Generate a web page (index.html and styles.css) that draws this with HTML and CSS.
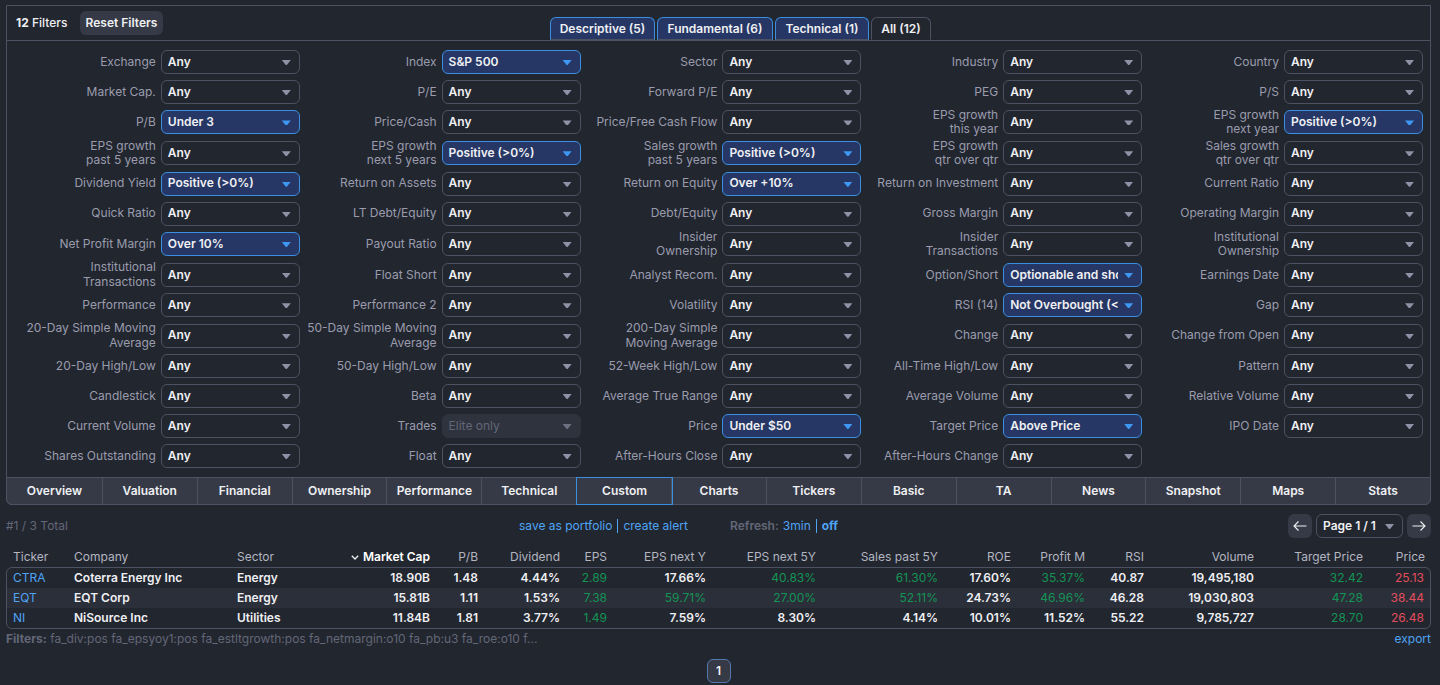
FILE: index.html
```html
<!DOCTYPE html>
<html lang="en">
<head>
<meta charset="utf-8">
<title>Stock Screener</title>
<link rel="stylesheet" href="styles.css">
</head>
<body>
<main class="screener">
<section class="panel">
<header class="panel-head">
<div class="count"><b>12</b> Filters</div>
<button class="reset">Reset Filters</button>
<nav class="tabs"><a class="tab t1">Descriptive (5)</a><a class="tab t2">Fundamental (6)</a><a class="tab t3">Technical (1)</a><a class="tab current">All (12)</a></nav>
</header>
<div class="filters">
<label>Exchange</label><div class="sel">Any</div>
<label>Index</label><div class="sel on">S&amp;P 500</div>
<label>Sector</label><div class="sel">Any</div>
<label>Industry</label><div class="sel">Any</div>
<label>Country</label><div class="sel">Any</div>

<label>Market Cap.</label><div class="sel">Any</div>
<label>P/E</label><div class="sel">Any</div>
<label>Forward P/E</label><div class="sel">Any</div>
<label>PEG</label><div class="sel">Any</div>
<label>P/S</label><div class="sel">Any</div>

<label>P/B</label><div class="sel on">Under 3</div>
<label>Price/Cash</label><div class="sel">Any</div>
<label>Price/Free Cash Flow</label><div class="sel">Any</div>
<label>EPS growth<br>this year</label><div class="sel">Any</div>
<label>EPS growth<br>next year</label><div class="sel on">Positive (&gt;0%)</div>

<label>EPS growth<br>past 5 years</label><div class="sel">Any</div>
<label>EPS growth<br>next 5 years</label><div class="sel on">Positive (&gt;0%)</div>
<label>Sales growth<br>past 5 years</label><div class="sel on">Positive (&gt;0%)</div>
<label>EPS growth<br>qtr over qtr</label><div class="sel">Any</div>
<label>Sales growth<br>qtr over qtr</label><div class="sel">Any</div>

<label>Dividend Yield</label><div class="sel on">Positive (&gt;0%)</div>
<label>Return on Assets</label><div class="sel">Any</div>
<label>Return on Equity</label><div class="sel on">Over +10%</div>
<label>Return on Investment</label><div class="sel">Any</div>
<label>Current Ratio</label><div class="sel">Any</div>

<label>Quick Ratio</label><div class="sel">Any</div>
<label>LT Debt/Equity</label><div class="sel">Any</div>
<label>Debt/Equity</label><div class="sel">Any</div>
<label>Gross Margin</label><div class="sel">Any</div>
<label>Operating Margin</label><div class="sel">Any</div>

<label>Net Profit Margin</label><div class="sel on">Over 10%</div>
<label>Payout Ratio</label><div class="sel">Any</div>
<label>Insider<br>Ownership</label><div class="sel">Any</div>
<label>Insider<br>Transactions</label><div class="sel">Any</div>
<label>Institutional<br>Ownership</label><div class="sel">Any</div>

<label>Institutional<br>Transactions</label><div class="sel">Any</div>
<label>Float Short</label><div class="sel">Any</div>
<label>Analyst Recom.</label><div class="sel">Any</div>
<label>Option/Short</label><div class="sel on"><span>Optionable and shortable</span></div>
<label>Earnings Date</label><div class="sel">Any</div>

<label>Performance</label><div class="sel">Any</div>
<label>Performance 2</label><div class="sel">Any</div>
<label>Volatility</label><div class="sel">Any</div>
<label>RSI (14)</label><div class="sel on"><span>Not Overbought (&lt;60)</span></div>
<label>Gap</label><div class="sel">Any</div>

<label>20-Day Simple Moving<br>Average</label><div class="sel">Any</div>
<label>50-Day Simple Moving<br>Average</label><div class="sel">Any</div>
<label>200-Day Simple<br>Moving Average</label><div class="sel">Any</div>
<label>Change</label><div class="sel">Any</div>
<label>Change from Open</label><div class="sel">Any</div>

<label>20-Day High/Low</label><div class="sel">Any</div>
<label>50-Day High/Low</label><div class="sel">Any</div>
<label>52-Week High/Low</label><div class="sel">Any</div>
<label>All-Time High/Low</label><div class="sel">Any</div>
<label>Pattern</label><div class="sel">Any</div>

<label>Candlestick</label><div class="sel">Any</div>
<label>Beta</label><div class="sel">Any</div>
<label>Average True Range</label><div class="sel">Any</div>
<label>Average Volume</label><div class="sel">Any</div>
<label>Relative Volume</label><div class="sel">Any</div>

<label>Current Volume</label><div class="sel">Any</div>
<label>Trades</label><div class="sel off">Elite only</div>
<label>Price</label><div class="sel on">Under $50</div>
<label>Target Price</label><div class="sel on">Above Price</div>
<label>IPO Date</label><div class="sel">Any</div>

<label>Shares Outstanding</label><div class="sel">Any</div>
<label>Float</label><div class="sel">Any</div>
<label>After-Hours Close</label><div class="sel">Any</div>
<label>After-Hours Change</label><div class="sel">Any</div>
</div>
<nav class="views"><a>Overview</a><a>Valuation</a><a>Financial</a><a>Ownership</a><a>Performance</a><a>Technical</a><a class="picked">Custom</a><a>Charts</a><a>Tickers</a><a>Basic</a><a>TA</a><a>News</a><a>Snapshot</a><a>Maps</a><a>Stats</a></nav>
</section>

<div class="toolbar">
<div class="total">#1 / 3 Total</div>
<div class="actions"><a>save as portfolio</a><i></i><a>create alert</a></div>
<div class="refresh"><b>Refresh:</b><a>3min</a><i></i><a class="strong">off</a></div>
<div class="pager">
<button class="arrow"><svg width="14" height="12" viewBox="0 0 14 12"><path d="M13.5 6H1M5.5 1.5 1 6l4.500 4.500"/></svg></button>
<div class="sel page">Page 1 / 1</div>
<button class="arrow"><svg width="14" height="12" viewBox="0 0 14 12"><path d="M.5 6H13M8.500 1.500 13 6l-4.500 4.500"/></svg></button>
</div>
</div>

<section class="results">
<div class="row head"><span class="l">Ticker</span><span class="l">Company</span><span class="l">Sector</span><span class="sorted"><svg width="8" height="5" viewBox="0 0 8 5"><path d="M.8.8 4 4 7.200.8"/></svg>Market Cap</span><span>P/B</span><span>Dividend</span><span>EPS</span><span>EPS next Y</span><span>EPS next 5Y</span><span>Sales past 5Y</span><span>ROE</span><span>Profit M</span><span>RSI</span><span>Volume</span><span>Target Price</span><span>Price</span></div>
<div class="body">
<div class="row"><a class="l">CTRA</a><span class="l">Coterra Energy Inc</span><span class="l">Energy</span><span>18.90B</span><span>1.48</span><span>4.44%</span><span class="up">2.89</span><span>17.66%</span><span class="up">40.83%</span><span class="up">61.30%</span><span>17.60%</span><span class="up">35.37%</span><span>40.87</span><span>19,495,180</span><span class="up">32.42</span><span class="down">25.13</span></div>
<div class="row"><a class="l">EQT</a><span class="l">EQT Corp</span><span class="l">Energy</span><span>15.81B</span><span>1.11</span><span>1.53%</span><span class="up">7.38</span><span class="up">59.71%</span><span class="up">27.00%</span><span class="up">52.11%</span><span>24.73%</span><span class="up">46.96%</span><span>46.28</span><span>19,030,803</span><span class="up">47.28</span><span class="down">38.44</span></div>
<div class="row"><a class="l">NI</a><span class="l">NiSource Inc</span><span class="l">Utilities</span><span>11.84B</span><span>1.81</span><span>3.77%</span><span class="up">1.49</span><span>7.59%</span><span>8.30%</span><span>4.14%</span><span>10.01%</span><span>11.52%</span><span>55.22</span><span>9,785,727</span><span class="up">28.70</span><span class="down">26.48</span></div>
</div>
</section>
<div class="foot"><div><b>Filters:</b> fa_div:pos fa_epsyoy1:pos fa_estltgrowth:pos fa_netmargin:o10 fa_pb:u3 fa_roe:o10 f...</div><a>export</a></div>
<nav class="pages"><a>1</a></nav>
</main>
</body>
</html>
```
FILE: styles.css
```css
* { box-sizing: border-box; }
body {
  margin: 0;
  background: #22262f;
  color: #eff0f3;
  font: 500 12px/14.4px Inter, "Liberation Sans", sans-serif;
  height: 685px;
  overflow: hidden;
}
button { font: inherit; color: inherit; border: 0; padding: 0; }
a { color: #4fa4f4; }
.screener { padding: 5px 9px 0 6px; }

.panel {
  height: 500px;
  border: 1px solid #4c5261;
  border-radius: 0 0 6px 6px;
  display: flex;
  flex-direction: column;
}
.panel-head {
  display: flex;
  height: 35px;
  flex: none;
  padding-left: 9px;
  border-bottom: 1px solid #4c5261;
}
.count { width: 64px; padding-top: 10px; font-size: 12px; white-space: nowrap; }
.reset {
  width: 83px;
  height: 24px;
  margin-top: 5px;
  border-radius: 6px;
  background: #363a46;
  font-weight: 600;
  white-space: nowrap;
}
.tabs { display: flex; gap: 2px; margin: 11px 0 -1px 387px; }
.tab {
  height: 23px;
  border: 1px solid #3b8ee0;
  border-bottom-color: #4c5261;
  border-radius: 6px 6px 0 0;
  background: #263765;
  color: #eff0f3;
  font-weight: 600;
  line-height: 22px;
  text-align: center;
  white-space: nowrap;
}
.t1 { width: 105px; }
.t2 { width: 116px; }
.t3 { width: 94px; }
.tab.current { width: 60px; border-color: #4c5261; border-bottom-color: #22262f; background: #22262f; }

.filters {
  display: grid;
  grid-template-columns: repeat(5, minmax(0, 1fr) 139px);
  align-items: center;
  padding: 6px 7px 0 12px;
  flex: none;
}
.filters label {
  padding: 1px 5px 1px 0;
  color: #9a9cad;
  font-weight: 400;
  text-align: right;
  white-space: nowrap;
}
.sel {
  display: flex;
  align-items: center;
  justify-content: space-between;
  height: 24px;
  margin: 3px 0;
  padding: 0 8px 0 6px;
  border: 1px solid #4c5261;
  border-radius: 6px;
  font-weight: 600;
  white-space: nowrap;
  overflow: hidden;
}
.sel span { width: 108px; overflow: hidden; }
.sel::after {
  content: "";
  flex: none;
  width: 9px;
  height: 5px;
  margin-top: 1px;
  background: #9091a6;
  clip-path: polygon(0 0, 100% 0, 56% 100%, 44% 100%);
}
.sel.on { background: #263765; border-color: #3b8ee0; }
.sel.on::after { background: #3e97f2; }
.sel.off { background: #2f333e; border-color: #2f333e; color: #636778; font-weight: 400; }
.sel.off::after { background: #6c7080; }

.views {
  display: grid;
  grid-template-columns: repeat(15, minmax(0, 1fr));
  height: 28px;
  margin: auto -1px -1px;
  border: 1px solid #4c5261;
  border-radius: 0 0 6px 6px;
  background: #363a46;
}
.views a {
  color: #eff0f3;
  border-left: 1px solid #4c5261;
  font-weight: 600;
  line-height: 26px;
  text-align: center;
}
.views a:first-child { border-left: 0; }
.views .picked { margin: -1px -2px -1px 0; border: 1px solid #3b8ee0; position: relative; }

.toolbar { display: flex; height: 42px; align-items: center; color: #636778; font-weight: 400; white-space: nowrap; }
.total { width: 513px; }
.actions, .refresh { display: flex; align-items: center; }
.actions { width: 211px; }
.toolbar i { width: 1px; height: 14px; margin: 0 5px; background: #4fa4f4; }
.refresh b { margin-right: 4px; font-weight: 600; }
.strong { font-weight: 700; }
.pager { display: flex; gap: 4px; margin-left: auto; color: #eff0f3; align-items: center; }
.arrow { width: 24px; height: 24px; border-radius: 6px; background: #363a46; display: grid; place-items: center; }
svg { fill: none; stroke: #eff0f3; stroke-width: 1.1; }
.page { width: 87px; margin: 0; }

.row {
  display: grid;
  grid-template-columns: 61px 163px 69px 136px 48px 82px 47px 99px 110px 122px 73px 74px 59px 110px 109px 1fr;
  line-height: 20px;
  text-align: right;
  white-space: nowrap;
}
.row > * { padding: 0 6px 0 0; }
.row > .l { padding: 0 0 0 6px; text-align: left; }
.head { color: #b3b5c0; font-weight: 400; padding: 0 0 0 1px; }
.head .sorted { color: #fff; font-weight: 600; }
.sorted svg { margin-right: 4px; vertical-align: 1px; stroke-width: 1.3; }
.body { border: 1px solid #4c5261; border-radius: 6px; overflow: hidden; }
.body span { font-weight: 600; }
.body .row { border-radius: 0; }
.body .row:nth-child(2) { background: #2b2f3a; }
.body a { font-weight: 400; }
.body .up { color: #149454; font-weight: 400; }
.body .down { color: #e24d5c; font-weight: 400; }

.foot { display: flex; justify-content: space-between; color: #636778; font-weight: 400; line-height: 20px; }
.pages { display: grid; justify-content: center; padding-top: 10px; }
.pages a {
  width: 24px;
  height: 24px;
  border: 1px solid #5279aa;
  border-radius: 6px;
  background: #363a46;
  color: #eff0f3;
  font-weight: 600;
  line-height: 22px;
  text-align: center;
}
```
